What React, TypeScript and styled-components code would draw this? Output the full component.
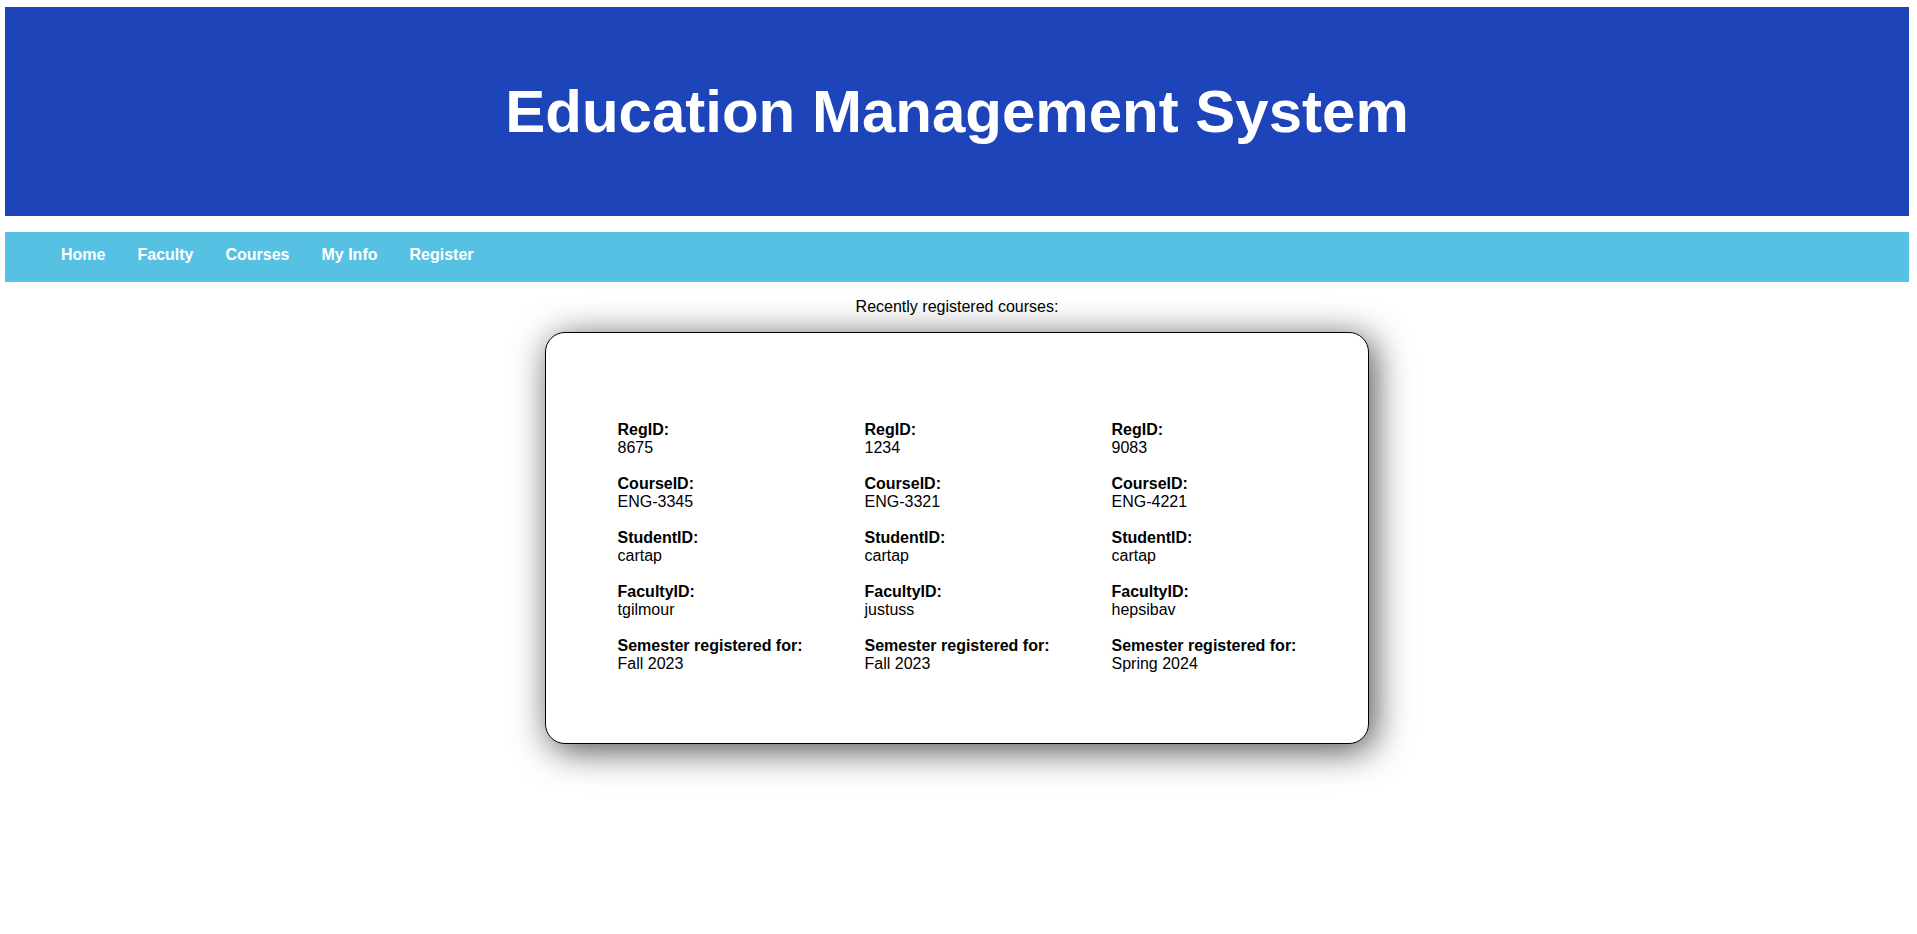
import React from "react";
import styled, { createGlobalStyle } from "styled-components";

const GlobalStyle = createGlobalStyle`
  body {
    margin: 7px 8px 8px 5px;
    background: #ffffff;
    color: #000000;
    font: 16px/18px "Liberation Sans", Arial, sans-serif;
  }
`;

const Banner = styled.header`
  padding: 70px 16px;
  background: #1d44b8;
  color: #ffffff;
  text-align: center;
`;

const Title = styled.h1`
  margin: 0;
  font-size: 60px;
  line-height: 69px;
`;

const NavBar = styled.nav`
  margin-top: 16px;
  padding: 14px 40px 18px;
  background: #57c1e4;
`;

const NavList = styled.ul`
  display: flex;
  flex-wrap: wrap;
  margin: 0;
  padding: 0;
  list-style: none;
`;

const NavLink = styled.a`
  display: block;
  padding: 0 16px;
  color: #ffffff;
  font-weight: bold;
  text-decoration: none;
`;

const Main = styled.main`
  display: flex;
  flex-direction: column;
  align-items: center;
  padding-bottom: 64px;
`;

const Caption = styled.p`
  margin: 16px 0;
`;

const Card = styled.section`
  display: flex;
  flex-wrap: wrap;
  gap: 62px;
  padding: 88px 72px 70px;
  border: 1px solid #000000;
  border-radius: 20px;
  background: #ffffff;
  box-shadow: 5px 6px 36px rgba(0, 0, 0, 0.7);
`;

const Registration = styled.dl`
  display: flex;
  flex-direction: column;
  gap: 18px;
  margin: 0;
`;

const Field = styled.div``;

const Label = styled.dt`
  font-weight: bold;
`;

const Value = styled.dd`
  margin: 0;
`;

const links = ["Home", "Faculty", "Courses", "My Info", "Register"];

const fieldNames = ["RegID:", "CourseID:", "StudentID:", "FacultyID:", "Semester registered for:"];

const registrations = [
  ["8675", "ENG-3345", "cartap", "tgilmour", "Fall 2023"],
  ["1234", "ENG-3321", "cartap", "justuss", "Fall 2023"],
  ["9083", "ENG-4221", "cartap", "hepsibav", "Spring 2024"],
];

export default function App() {
  return (
    <>
      <GlobalStyle />
      <Banner>
        <Title>Education Management System</Title>
      </Banner>
      <NavBar>
        <NavList>
          {links.map((name) => (
            <li key={name}>
              <NavLink href="#">{name}</NavLink>
            </li>
          ))}
        </NavList>
      </NavBar>
      <Main>
        <Caption>Recently registered courses:</Caption>
        <Card>
          {registrations.map((values) => (
            <Registration key={values[0]}>
              {fieldNames.map((name, i) => (
                <Field key={name}>
                  <Label>{name}</Label>
                  <Value>{values[i]}</Value>
                </Field>
              ))}
            </Registration>
          ))}
        </Card>
      </Main>
    </>
  );
}
